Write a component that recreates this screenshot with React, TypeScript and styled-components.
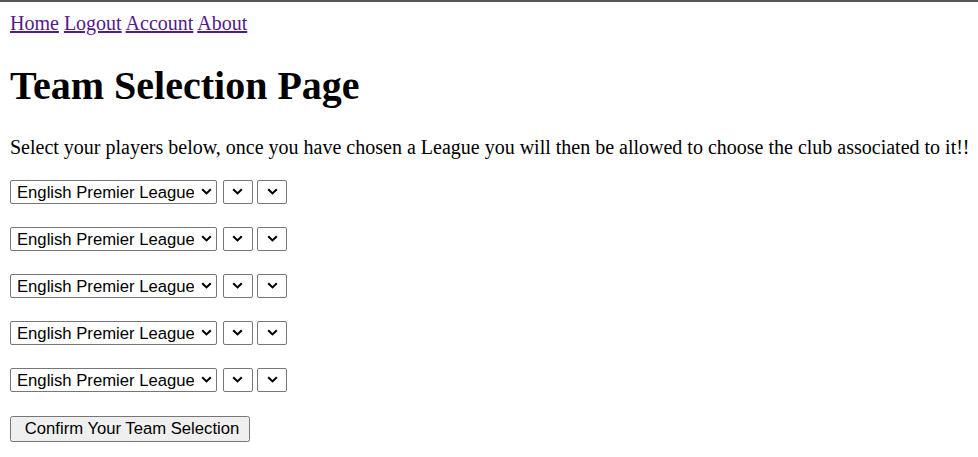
import React from 'react';
import styled, { createGlobalStyle } from 'styled-components';

const GlobalStyle = createGlobalStyle`
  html {
    border-top: 2px solid #555555;
    background: #ffffff;
  }
  body {
    margin: 10px;
    font-family: "Liberation Serif", "Times New Roman", serif;
    font-size: 20px;
    color: #000000;
  }
`;

const Nav = styled.nav`
  line-height: 23px;
`;

const NavLink = styled.a`
  color: #551a8b;
  text-decoration: underline;
  cursor: pointer;
`;

const Title = styled.h1`
  font-size: 40px;
  font-weight: bold;
  margin: 26.8px 0;
`;

const Intro = styled.p`
  margin: 26.8px 0 21px;
  line-height: 23px;
  white-space: nowrap;
`;

const Form = styled.form`
  display: flex;
  flex-direction: column;
  align-items: flex-start;
  gap: 23px;
`;

const Row = styled.div`
  display: flex;
  gap: 5.5px;
`;

const SelectWrap = styled.span<{ $width: number }>`
  position: relative;
  display: inline-block;
  width: ${(p) => p.$width}px;
  height: 24px;
`;

const Select = styled.select`
  appearance: none;
  -webkit-appearance: none;
  box-sizing: border-box;
  width: 100%;
  height: 100%;
  margin: 0;
  padding: 0 22px 0 6px;
  font-family: "Liberation Sans", Arial, sans-serif;
  font-size: 16.67px;
  color: #000000;
  background: #ffffff;
  border: 1px solid #767676;
  border-radius: 2px;
  outline: none;
`;

const Chevron = styled.svg<{ $centered?: boolean }>`
  position: absolute;
  top: 8.5px;
  ${(p) => (p.$centered ? 'left: 50%; margin-left: -5.5px;' : 'right: 5px;')}
  width: 11px;
  height: 7px;
  pointer-events: none;
`;

const Button = styled.button`
  width: 240px;
  height: 26px;
  margin-top: 1px;
  padding: 0 0 0 4px;
  font-family: "Liberation Sans", Arial, sans-serif;
  font-size: 16.67px;
  color: #000000;
  background: #efefef;
  border: 1px solid #767676;
  border-radius: 2.5px;
`;

const links = ['Home', 'Logout', 'Account', 'About'];

const Arrow: React.FC<{ centered?: boolean }> = ({ centered }) => (
  <Chevron $centered={centered} viewBox="0 0 11 7">
    <path d="M1.2 1.2 L5.5 5.4 L9.8 1.2" fill="none" stroke="#000" strokeWidth="2.1" />
  </Chevron>
);

const App: React.FC = () => {
  const rows = [0, 1, 2, 3, 4];

  return (
    <>
      <GlobalStyle />
      <Nav>
        {links.map((l, i) => (
          <React.Fragment key={l}>
            <NavLink href="#">{l}</NavLink>
            {i < links.length - 1 ? ' ' : null}
          </React.Fragment>
        ))}
      </Nav>
      <Title>Team Selection Page</Title>
      <Intro>
        Select your players below, once you have chosen a League you will then be allowed to choose
        the club associated to it!!
      </Intro>
      <Form onSubmit={(e) => e.preventDefault()}>
        {rows.map((r) => (
          <Row key={r}>
            <SelectWrap $width={207}>
              <Select defaultValue="epl">
                <option value="epl">English Premier League</option>
              </Select>
              <Arrow />
            </SelectWrap>
            <SelectWrap $width={29}>
              <Select />
              <Arrow centered />
            </SelectWrap>
            <SelectWrap $width={30}>
              <Select />
              <Arrow centered />
            </SelectWrap>
          </Row>
        ))}
        <Button type="submit">Confirm Your Team Selection</Button>
      </Form>
    </>
  );
};

export default App;
